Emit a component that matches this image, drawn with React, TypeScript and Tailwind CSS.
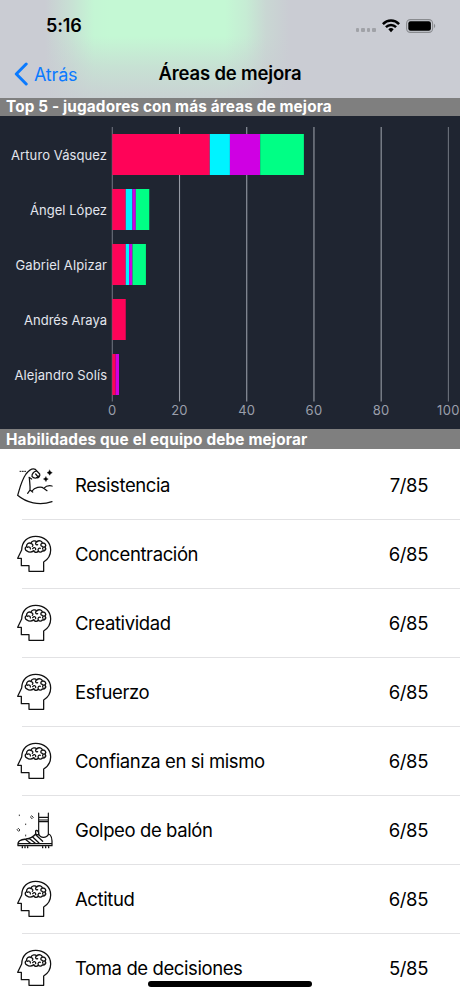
import React from "react";

const players = [
  { name: "Arturo Vásquez", width: 96, values: [29, 6, 9, 13] },
  { name: "Ángel López", width: 77, values: [4, 2, 1, 4] },
  { name: "Gabriel Alpizar", width: 91.5, values: [4, 1, 1, 4] },
  { name: "Andrés Araya", width: 83, values: [4, 0, 0, 0] },
  { name: "Alejandro Solís", width: 92.5, values: [1, 0, 1, 0] },
];
const colors = ["#ff0358", "#00f3ff", "#cf00e3", "#00ff85"];
const X0 = 112.3;
const UNIT = 3.361;

function Chart() {
  return (
    <svg className="block h-[313px] w-full shrink-0 bg-[#1f2531]" viewBox="0 0 460 313" fontFamily="Inter, sans-serif">
      {[0, 20, 40, 60, 80, 100].map((t) => (
        <g key={t}>
          <line x1={X0 + t * UNIT} x2={X0 + t * UNIT} y1="11" y2="285.5" stroke={t === 0 || t === 100 ? "#6c717c" : "#969ba5"} strokeWidth="1.1" />
          <text x={X0 + t * UNIT} y="299" textAnchor="middle" fontSize="13" letterSpacing=".3" fill="#9a9fab">{t}</text>
        </g>
      ))}
      {players.map((p, i) => {
        let sum = 0;
        return (
          <g key={p.name}>
            <text x={107 - p.width} y={44 + i * 55} fontSize="13" textLength={p.width} fill="#e3e6ee">{p.name}</text>
            {p.values.map((v, j) => {
              const x = X0 + sum * UNIT;
              sum += v;
              return <rect key={j} x={x} y={18 + i * 55} width={v * UNIT} height="41" fill={colors[j]} />;
            })}
          </g>
        );
      })}
    </svg>
  );
}

function HeadIcon() {
  return (
    <g>
      <path d="M101 124 H57 V107 H34 V85 H23 L35 60 C36 35 52 19 77 19 C104 19 122 37 122 60 C122 76 114 88 101 96 Z" strokeWidth="3.8" />
      <path d="M51 63 C44 61 44 52 50 50 C48 41 57 37 63 40 C65 31 77 31 80 36 C87 29 96 33 97 39 C106 38 110 46 105 51 C110 58 104 64 97 63 C93 68 88 67 85 64 C79 70 72 66 72 62 C65 67 56 67 51 63Z" strokeWidth="4.2" />
      <path d="M52 52 C58 49 62 53 61 57 M63 41 C69 42 70 46 67 49 M79 36 C74 40 78 46 83 44 M68 56 C73 50 78 54 77 59 M85 63 C82 57 87 53 91 55 M96 40 C90 43 92 48 97 49 M104 51 C99 50 96 54 99 58" strokeWidth="3.8" />
    </g>
  );
}

function ArmIcon() {
  return (
    <g>
      <path d="M23 103 C31 76 35 57 48 39 C56 29 66 20 76 25 L89 39 C91 45 86 52 79 50 M23 103 C48 125 88 135 126 122 M82 31 C72 29 65 39 66 46 C71 53 81 53 86 45 M77 39 L82 45 M57 49 L65 54 M58 50 C59 64 61 76 60 87 L53 97 M60 87 L68 93 M66 90 C73 80 93 74 101 82 L111 89 M101 82 C109 74 117 73 126 75" strokeWidth="3.8" />
      <path d="M30 31 h3 M37 31 h3 M44 31 h3" strokeWidth="3" />
      <path d="M119 27 L122 32 L127 35 L122 38 L119 43 L116 38 L111 35 L116 32Z M108 47 L110 52 L115 54 L110 57 L108 62 L105 57 L100 54 L105 51Z" fill="#000" strokeWidth="1" />
    </g>
  );
}

function BootIcon() {
  return (
    <g>
      <path d="M86 21 V84 M115 21 V83 M86 34 H115 M86 42 H115 M86 47 H115" strokeWidth="3.5" />
      <path d="M86 84 C91 97 109 98 116 84 C125 86 127 99 126 119 H24 C22 105 31 101 48 99 C61 97 71 91 77 84 L86 87 M77 84 V75 C79 70 85 75 86 81 M24 113 H126 M46 100 L63 113 M57 97 L76 112 M68 93 L87 111 M78 87 L98 106" strokeWidth="3.8" />
      <path d="M37 122 V125 M45 122 V125 M53 122 V125 M98 122 V125 M107 122 V125 M116 122 V125" strokeWidth="4" />
      <path d="M66 30 l4 4 l-4 4 l-4-4Z M26 68 l4 4 l-4 4 l-4-4Z M28 27 v2 M47 54 v2 M47 87 v3" strokeWidth="2.5" />
    </g>
  );
}

const skills: { name: string; score: string; icon: "arm" | "head" | "boot" }[] = [
  { name: "Resistencia", score: "7/85", icon: "arm" },
  { name: "Concentración", score: "6/85", icon: "head" },
  { name: "Creatividad", score: "6/85", icon: "head" },
  { name: "Esfuerzo", score: "6/85", icon: "head" },
  { name: "Confianza en si mismo", score: "6/85", icon: "head" },
  { name: "Golpeo de balón", score: "6/85", icon: "boot" },
  { name: "Actitud", score: "6/85", icon: "head" },
  { name: "Toma de decisiones", score: "5/85", icon: "head" },
];

export default function App() {
  return (
    <div className="relative flex h-[996px] w-[460px] flex-col overflow-hidden bg-white font-[Inter,sans-serif] text-black">
      <header className="flex h-[98px] shrink-0 flex-col bg-[linear-gradient(to_bottom,#caccd300_0px,#caccd300_36px,#caccd380_66px,#caccd3e0_98px),linear-gradient(to_right,#caccd3_45px,#c8e0d4_70px,#c4f6d4_94px,#c4f8d4_110px,#c4f8d4_225px,#c6ecd4_246px,#c9d7d3_266px,#caccd3_290px)]">
        <div className="flex h-[50px] items-center pt-px pr-[24px] pl-[46px]">
          <span className="text-[18px] font-semibold tracking-[-0.15px]">5:16</span>
          <div className="ml-auto flex items-center">
            <div className="mt-[9px] mr-[6px] flex gap-[2px]">
              {[0, 1, 2, 3].map((i) => <i key={i} className="h-[4px] w-[3.6px] rounded-[1px] bg-[#a0a2a7]" />)}
            </div>
            <svg className="h-[14px] w-[18px]" viewBox="0 0 18 14" fill="none" stroke="#000" strokeWidth="2.5">
              <path d="M.9 5.1 C5.5.4 12.5.4 17.1 5.1 M3.9 8.2 C6.8 5.3 11.2 5.3 14.1 8.2" />
              <path d="M6.3 10.2 Q9 8 11.7 10.2 L9 13.3Z" fill="#000" stroke="none" />
            </svg>
            <svg className="ml-[6px] h-[14px] w-[30px]" viewBox="0 0 30 14">
              <rect x=".6" y=".6" width="26" height="12.8" rx="3.8" fill="none" stroke="#898b8f" strokeWidth="1.1" />
              <rect x="2.3" y="2.3" width="22.6" height="9.4" rx="2.2" />
              <path d="M28 4.8 Q30.5 7 28 9.2Z" fill="#898b8f" />
            </svg>
          </div>
        </div>
        <div className="grid h-[48px] grid-cols-[1fr_auto_1fr] items-center">
          <div className="flex items-center gap-[6px] pl-[14px] text-[#0a7aff]">
            <svg className="h-[24px] w-[14px]" viewBox="0 0 14 24" fill="none" stroke="currentColor" strokeWidth="3" strokeLinecap="round" strokeLinejoin="round"><path d="M12.2 2 L2.3 12 L12.2 22" /></svg>
            <span className="text-[18px] tracking-[-0.2px]">Atrás</span>
          </div>
          <h1 className="text-[18.5px] font-semibold tracking-[-0.17px]">Áreas de mejora</h1>
        </div>
      </header>
      <h2 className="flex h-[18px] shrink-0 items-center bg-[#7f7f7f] pl-[6px] text-[15.3px] leading-[18px] font-bold tracking-[0.15px] text-white">Top 5 - jugadores con más áreas de mejora</h2>
      <Chart />
      <h2 className="flex h-[20px] shrink-0 items-center bg-[#7f7f7f] pt-px pl-[6px] text-[15.3px] leading-[20px] font-bold tracking-[0.18px] text-white">Habilidades que el equipo debe mejorar</h2>
      <ul className="flex flex-col pt-[2px]">
        {skills.map((s) => (
          <li key={s.name} className="flex h-[69px] shrink-0 flex-col">
            <div className="flex min-h-0 flex-1 items-center pt-[2px] pr-[32px] pl-[10px] text-[18.5px] tracking-[-0.4px]">
              <svg className="mr-[5px] h-[50px] w-[60px] shrink-0" viewBox="0 0 180 150" fill="none" stroke="#111" strokeLinejoin="round" strokeLinecap="round">
                {s.icon === "head" ? <HeadIcon /> : s.icon === "arm" ? <ArmIcon /> : <BootIcon />}
              </svg>
              <span>{s.name}</span>
              <span className="ml-auto">{s.score}</span>
            </div>
            <div className="ml-[22px] h-px shrink-0 bg-[#e2e2e4]" />
          </li>
        ))}
      </ul>
      <div className="absolute top-[981px] left-[148px] h-[6px] w-[164px] rounded-full bg-black" />
    </div>
  );
}
